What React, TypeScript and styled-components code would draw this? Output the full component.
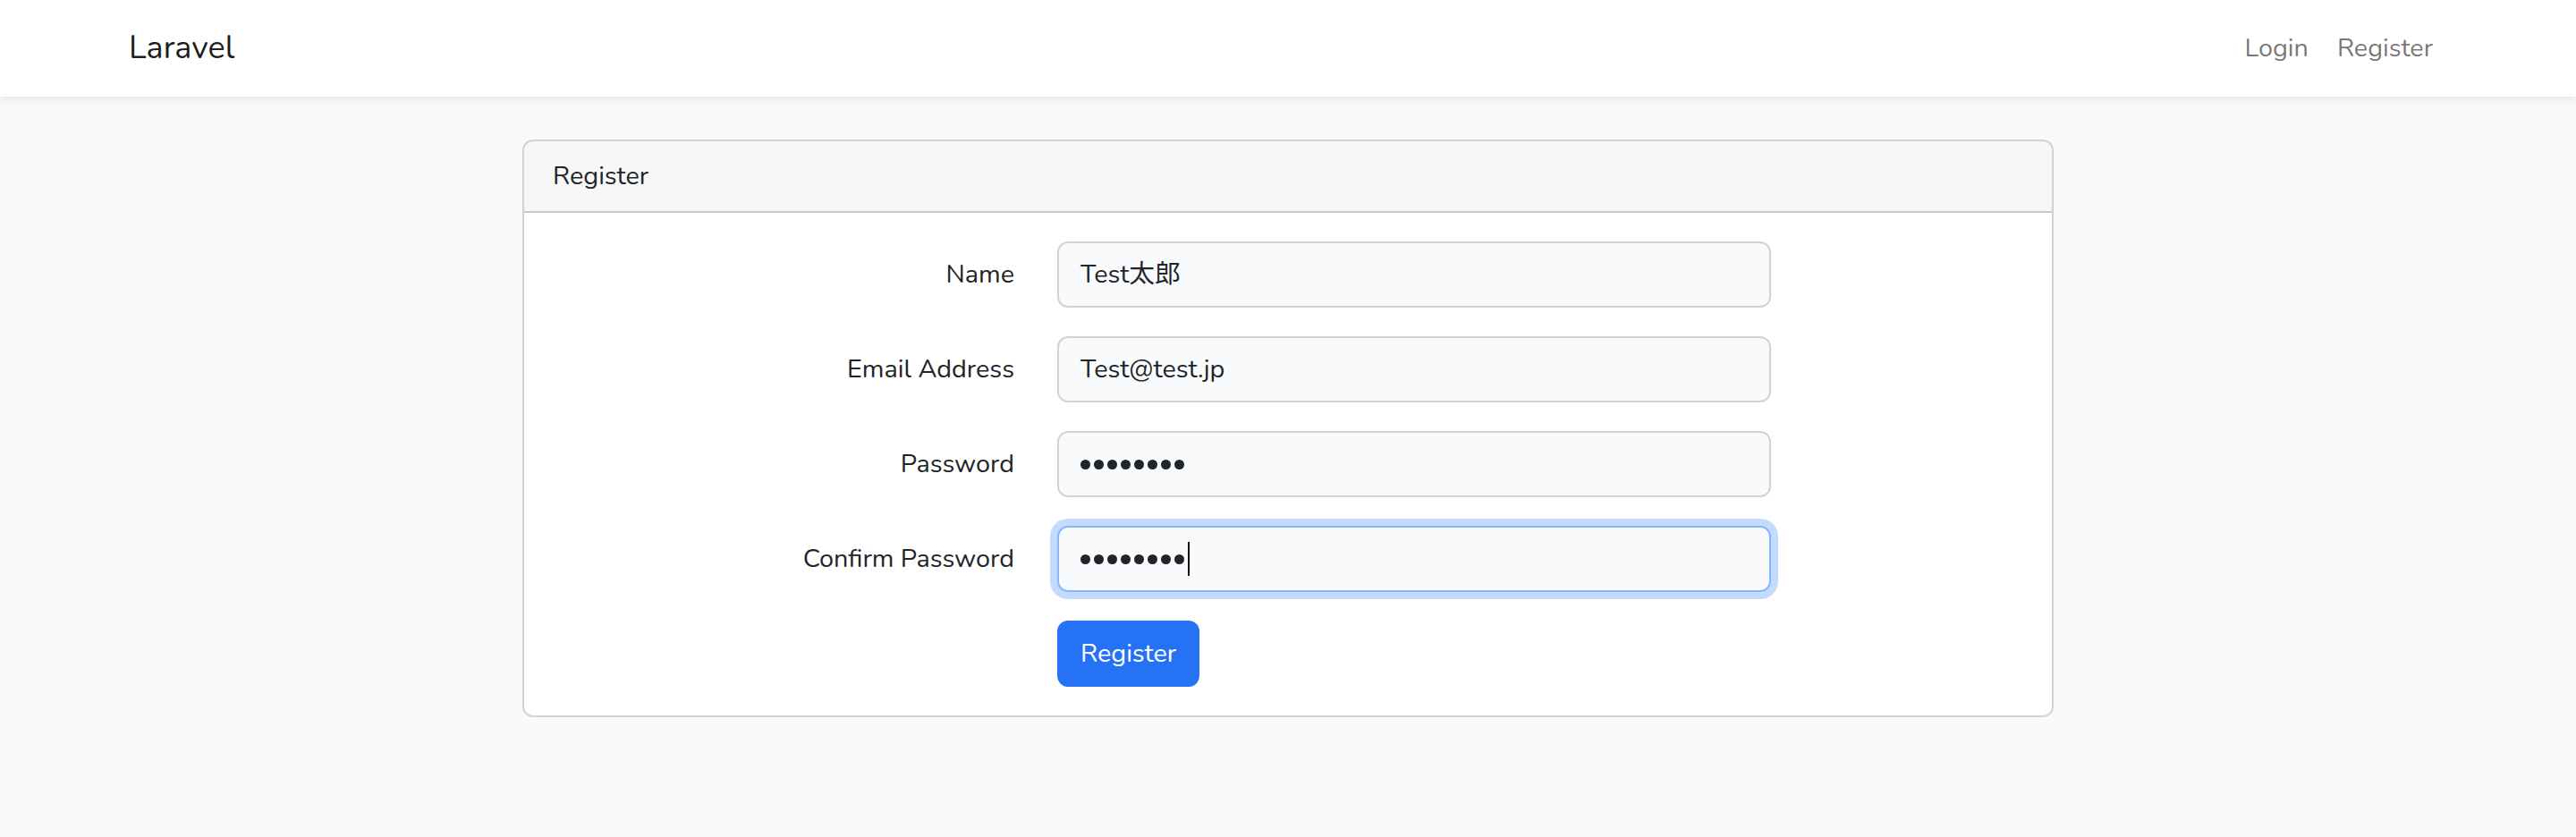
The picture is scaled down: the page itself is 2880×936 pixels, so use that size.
import React from "react";
import styled, { createGlobalStyle, css } from "styled-components";

const GlobalStyle = createGlobalStyle`
    * { box-sizing: border-box; }
    html, body { margin: 0; padding: 0; }
    body {
        background: #f8fafc;
        color: #212529;
        font-family: "Nunito", "Lato", "Noto Sans CJK JP", sans-serif;
        font-size: 28.8px;
        line-height: 1.6;
    }
`;

const Navbar = styled.nav`
    background: #fff;
    box-shadow: 0 4px 8px rgba(0, 0, 0, 0.075);
    padding: 16px 0;
`;

const Container = styled.div`
    max-width: 2640px;
    margin: 0 auto;
    padding: 0 24px;
`;

const NavInner = styled(Container)`
    display: flex;
    align-items: center;
    justify-content: space-between;
    height: 76px;
`;

const Brand = styled.a`
    font-size: 36px;
    color: rgba(0, 0, 0, 0.9);
    text-decoration: none;
`;

const NavList = styled.ul`
    display: flex;
    list-style: none;
    margin: 0;
    padding: 0;
`;

const NavLink = styled.a`
    display: block;
    padding: 16px;
    color: rgba(0, 0, 0, 0.55);
    text-decoration: none;
`;

const Main = styled.main`
    padding: 48px 0;
`;

const Column = styled.div`
    max-width: 1760px;
    margin: 0 auto;
    padding: 0 24px;
`;

const Card = styled.div`
    background: #fff;
    border: 2px solid rgba(0, 0, 0, 0.175);
    border-radius: 12px;
    overflow: hidden;
`;

const CardHeader = styled.div`
    background: rgba(0, 0, 0, 0.03);
    border-bottom: 2px solid rgba(0, 0, 0, 0.175);
    padding: 16px 32px;
`;

const CardBody = styled.div`
    padding: 32px;
`;

const FormRow = styled.div<{ $last?: boolean }>`
    display: grid;
    grid-template-columns: 4fr 6fr 2fr;
    margin: 0 -24px ${p => (p.$last ? "0" : "32px")};
`;

const Label = styled.label`
    padding: 14px 24px 0;
    text-align: right;
`;

const Cell = styled.div<{ $offset?: boolean }>`
    padding: 0 24px;
    ${p => p.$offset && css`grid-column: 2;`}
`;

const Control = styled.div<{ $focused?: boolean }>`
    display: flex;
    align-items: center;
    height: 74px;
    padding: 12px 24px;
    background: #f8fafc;
    border: 2px solid #ced4da;
    border-radius: 12px;
    ${p => p.$focused && css`
        border-color: #86b7fe;
        box-shadow: 0 0 0 8px rgba(13, 110, 253, 0.25);
    `}
`;

const Dot = styled.span`
    width: 11px;
    height: 11px;
    border-radius: 50%;
    background: #212529;
    margin-right: 4px;
`;

const Caret = styled.span`
    width: 2px;
    height: 38px;
    background: #111;
`;

const Button = styled.button`
    font: inherit;
    color: #fff;
    background: #2672f5;
    border: 2px solid #2672f5;
    border-radius: 12px;
    padding: 12px 24px;
    cursor: pointer;
`;

const Dots: React.FC<{ count: number }> = ({ count }) => (
    <>
        {Array.from({ length: count }).map((_, i) => <Dot key={i} />)}
    </>
);

const fields = [
    { label: "Name", value: "Test太郎" },
    { label: "Email Address", value: "Test@test.jp" },
    { label: "Password", secret: 8 },
    { label: "Confirm Password", secret: 8, focused: true },
];

export default function App() {
    return (
        <>
            <GlobalStyle />
            <Navbar>
                <NavInner>
                    <Brand href="#">Laravel</Brand>
                    <NavList>
                        <li><NavLink href="#">Login</NavLink></li>
                        <li><NavLink href="#">Register</NavLink></li>
                    </NavList>
                </NavInner>
            </Navbar>
            <Main>
                <Container>
                    <Column>
                        <Card>
                            <CardHeader>Register</CardHeader>
                            <CardBody>
                                {fields.map(f => (
                                    <FormRow key={f.label}>
                                        <Label>{f.label}</Label>
                                        <Cell>
                                            <Control $focused={f.focused}>
                                                {f.secret ? <Dots count={f.secret} /> : f.value}
                                                {f.focused && <Caret />}
                                            </Control>
                                        </Cell>
                                    </FormRow>
                                ))}
                                <FormRow $last>
                                    <Cell $offset>
                                        <Button type="button">Register</Button>
                                    </Cell>
                                </FormRow>
                            </CardBody>
                        </Card>
                    </Column>
                </Container>
            </Main>
        </>
    );
}
